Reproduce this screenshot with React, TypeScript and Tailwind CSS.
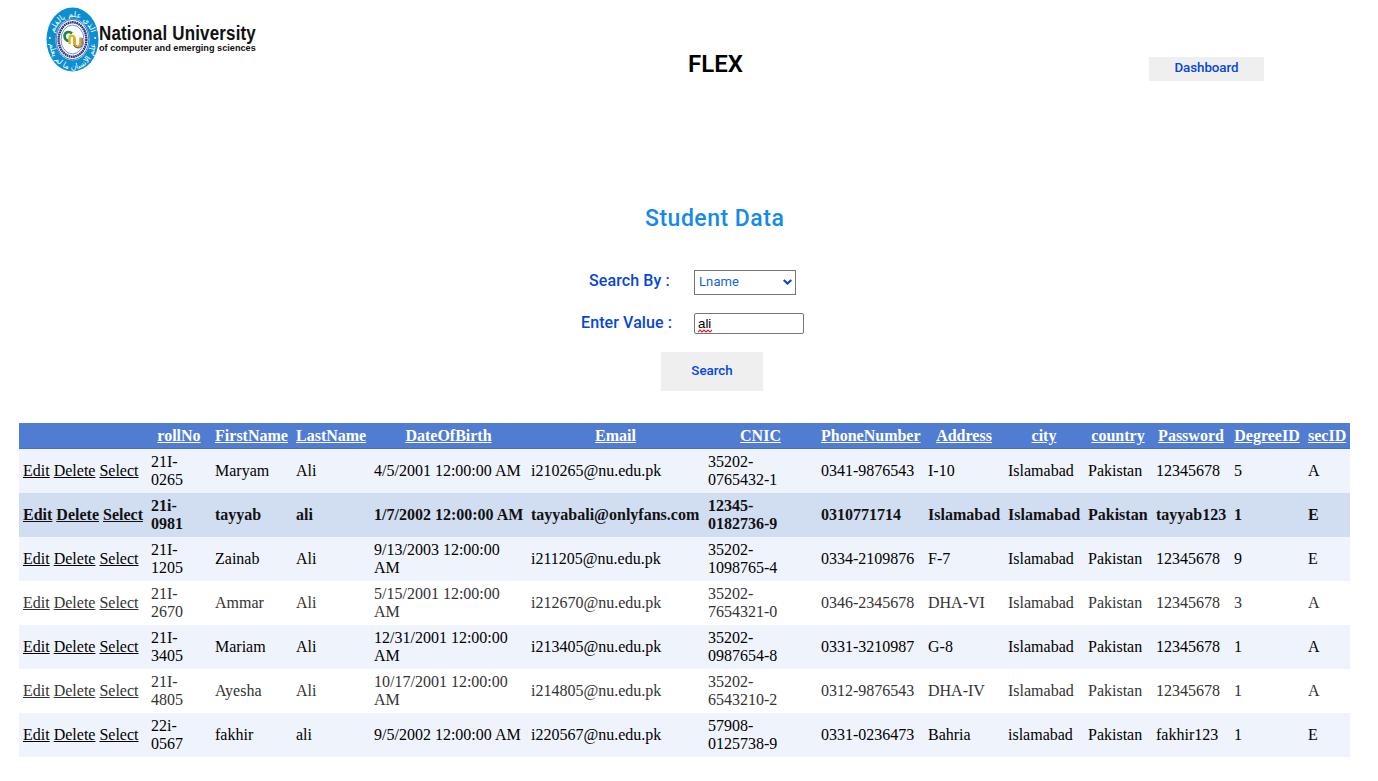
import React from "react";

const columns = [
  { label: "", width: "w-[128px]" },
  { label: "rollNo", width: "w-[64px]" },
  { label: "FirstName", width: "w-[81px]" },
  { label: "LastName", width: "w-[78px]" },
  { label: "DateOfBirth", width: "w-[157px]" },
  { label: "Email", width: "w-[177px]" },
  { label: "CNIC", width: "w-[113px]" },
  { label: "PhoneNumber", width: "w-[107px]" },
  { label: "Address", width: "w-[80px]" },
  { label: "city", width: "w-[80px]" },
  { label: "country", width: "w-[68px]" },
  { label: "Password", width: "w-[78px]" },
  { label: "DegreeID", width: "w-[74px]" },
  { label: "secID", width: "w-[46px]" },
];

const rows: string[][] = [
  ["21I-\n0265", "Maryam", "Ali", "4/5/2001 12:00:00 AM", "i210265@nu.edu.pk", "35202-\n0765432-1", "0341-9876543", "I-10", "Islamabad", "Pakistan", "12345678", "5", "A"],
  ["21i-\n0981", "tayyab", "ali", "1/7/2002 12:00:00 AM", "tayyabali@onlyfans.com", "12345-\n0182736-9", "0310771714", "Islamabad", "Islamabad", "Pakistan", "tayyab123", "1", "E"],
  ["21I-\n1205", "Zainab", "Ali", "9/13/2003 12:00:00\nAM", "i211205@nu.edu.pk", "35202-\n1098765-4", "0334-2109876", "F-7", "Islamabad", "Pakistan", "12345678", "9", "E"],
  ["21I-\n2670", "Ammar", "Ali", "5/15/2001 12:00:00\nAM", "i212670@nu.edu.pk", "35202-\n7654321-0", "0346-2345678", "DHA-VI", "Islamabad", "Pakistan", "12345678", "3", "A"],
  ["21I-\n3405", "Mariam", "Ali", "12/31/2001 12:00:00\nAM", "i213405@nu.edu.pk", "35202-\n0987654-8", "0331-3210987", "G-8", "Islamabad", "Pakistan", "12345678", "1", "A"],
  ["21I-\n4805", "Ayesha", "Ali", "10/17/2001 12:00:00\nAM", "i214805@nu.edu.pk", "35202-\n6543210-2", "0312-9876543", "DHA-IV", "Islamabad", "Pakistan", "12345678", "1", "A"],
  ["22i-\n0567", "fakhir", "ali", "9/5/2002 12:00:00 AM", "i220567@nu.edu.pk", "57908-\n0125738-9", "0331-0236473", "Bahria", "islamabad", "Pakistan", "fakhir123", "1", "E"],
];

const SELECTED = 1;

function rowStyle(index: number) {
  if (index === SELECTED) return "bg-[#d1ddf1] font-bold text-[#111]";
  return index % 2 === 0 ? "bg-[#eff3fb] text-black" : "bg-white text-[#333]";
}

function Logo() {
  return (
    <div className="flex h-[72px] w-[218px]">
      <svg width="53" height="66" viewBox="0 0 53 66" className="mt-[7px] shrink-0">
        <defs>
          <path id="ringTop" d="M6.5 35 A20 25 0 0 1 46.5 35" />
          <path id="ringBottom" d="M3.5 35 A23 27.5 0 0 0 49.5 35" />
        </defs>
        <ellipse cx="26.5" cy="32.5" rx="26" ry="32" fill="#0a8fd2" />
        <ellipse cx="26.5" cy="32.5" rx="17" ry="20.8" fill="#fff" />
        <ellipse cx="26.5" cy="32.5" rx="16.3" ry="20" fill="none" stroke="#27469b" strokeWidth="0.8" />
        <ellipse cx="26.5" cy="32.5" rx="13.9" ry="17.2" fill="none" stroke="#23357f" strokeWidth="2.4" strokeDasharray="1.7 0.5" />
        <ellipse cx="26.5" cy="32.5" rx="11.5" ry="14.4" fill="#fff" stroke="#27469b" strokeWidth="0.6" />
        <g fill="#fff" fontFamily="DejaVu Sans, sans-serif" fontSize="8" textAnchor="middle">
          <text><textPath href="#ringTop" startOffset="50%">الذي علم بالقلم</textPath></text>
          <text><textPath href="#ringBottom" startOffset="50%">علم الانسان ما لم يعلم</textPath></text>
        </g>
        <circle cx="3.8" cy="31" r="0.9" fill="#fff" />
        <circle cx="49.2" cy="31" r="0.9" fill="#fff" />
        <path d="M26 26.5 C23 23.5 18.5 25.5 18.5 29 C18.5 32 21 34.5 24 34" fill="none" stroke="#168b45" strokeWidth="2.6" />
        <path d="M23.5 37 V30.5 C24 28 28 28 28.5 31 V37" fill="none" stroke="#e4b323" strokeWidth="2.4" />
        <path d="M28.5 31 V37 C29.5 40.5 34 40.5 34.5 37 V30.5" fill="none" stroke="#dca61d" strokeWidth="2.6" />
        <path d="M27.5 38 C29.5 42 35.5 42 36.2 37.5 V31" fill="none" stroke="#263b75" strokeWidth="0.9" />
      </svg>
      <div className="flex flex-col whitespace-nowrap pt-[22px] font-['Liberation_Sans',Arial,sans-serif] font-bold text-[#111]">
        <span className="w-[181px] origin-left scale-x-[0.87] text-[19.5px] leading-[22px] tracking-[0.2px]">National University</span>
        <span className="-mt-0.5 w-[170px] origin-left scale-x-[0.935] text-[9.8px] leading-[12px]">of computer and emerging sciences</span>
      </div>
    </div>
  );
}

export default function App() {
  return (
    <main className="h-[781px] w-[1378px] overflow-hidden bg-white font-['Roboto',sans-serif] text-[#0546de]">
      <header className="flex h-[204px] items-start pl-[46px]">
        <Logo />
        <h1 className="ml-[424px] mt-[48px] w-[56px] whitespace-nowrap text-[24px] font-semibold leading-8 text-black">FLEX</h1>
        <button className="ml-[405px] mt-[57px] h-6 w-[115px] bg-[#efefef] pb-0.5 text-[13.33px] font-medium tracking-[-0.05px]">Dashboard</button>
      </header>

      <section className="flex h-[219px] flex-col">
        <h2 className="ml-[645px] h-[66px] whitespace-nowrap pt-px text-[23px] font-medium leading-7 tracking-[0.5px] text-[#158aea]">Student Data</h2>
        <div className="flex h-[43px] items-start">
          <label className="ml-[589px] w-[105px] text-[16px] font-medium leading-[22px] tracking-[0.1px]">Search By :</label>
          <div className="flex h-[25px] w-[102px] items-center justify-between border border-[#767676] pb-px pl-1 pr-[3px] text-[13px] tracking-[0.1px] text-[#1463d8]">
            <span>Lname</span>
            <svg width="9" height="6" viewBox="0 0 9 6" fill="none" stroke="#0546d2" strokeWidth="2"><path d="M0.7 0.9 L4.5 4.5 L8.3 0.9" /></svg>
          </div>
        </div>
        <div className="flex h-[39px] items-start">
          <label className="ml-[581px] w-[113px] text-[16px] font-medium leading-5 tracking-[0.1px]">Enter Value :</label>
          <div className="flex h-[21px] w-[110px] items-start rounded-[2px] border border-[#767676] pl-[3px] font-['Liberation_Sans',Arial,sans-serif] text-[13.33px] leading-[19px] text-black">
            <span className="relative">
              ali
              <svg width="14" height="4" viewBox="0 0 14 4" fill="none" stroke="#e02020" strokeWidth="1.1" className="absolute bottom-0 left-0"><path d="M0 3 L2 1 L4 3 L6 1 L8 3 L10 1 L12 3 L14 1" /></svg>
            </span>
          </div>
        </div>
        <button className="ml-[661px] h-[39px] w-[102px] bg-[#efefef] pb-0.5 text-[13.33px] font-medium">Search</button>
      </section>

      <table className="ml-[19px] w-[1331px] table-fixed border-collapse font-['Liberation_Serif','Times_New_Roman',serif] text-[16px] leading-[18px]">
        <colgroup>
          {columns.map((column, i) => <col key={i} className={column.width} />)}
        </colgroup>
        <thead>
          <tr className="h-[26px] bg-[#507cd1] text-white shadow-[inset_0_-1px_0_#4570bd]">
            {columns.map((column, i) => (
              <th key={i} className="whitespace-nowrap px-1 py-0 text-center font-bold underline">{column.label}</th>
            ))}
          </tr>
        </thead>
        <tbody>
          {rows.map((row, i) => (
            <tr key={i} className={`h-[44px] ${rowStyle(i)}`}>
              <td className="whitespace-nowrap px-1 py-0">
                <a className="underline">Edit</a> <a className="underline">Delete</a> <a className="underline">Select</a>
              </td>
              {row.map((value, j) => <td key={j} className="whitespace-pre px-1 py-0">{value}</td>)}
            </tr>
          ))}
        </tbody>
      </table>
    </main>
  );
}
